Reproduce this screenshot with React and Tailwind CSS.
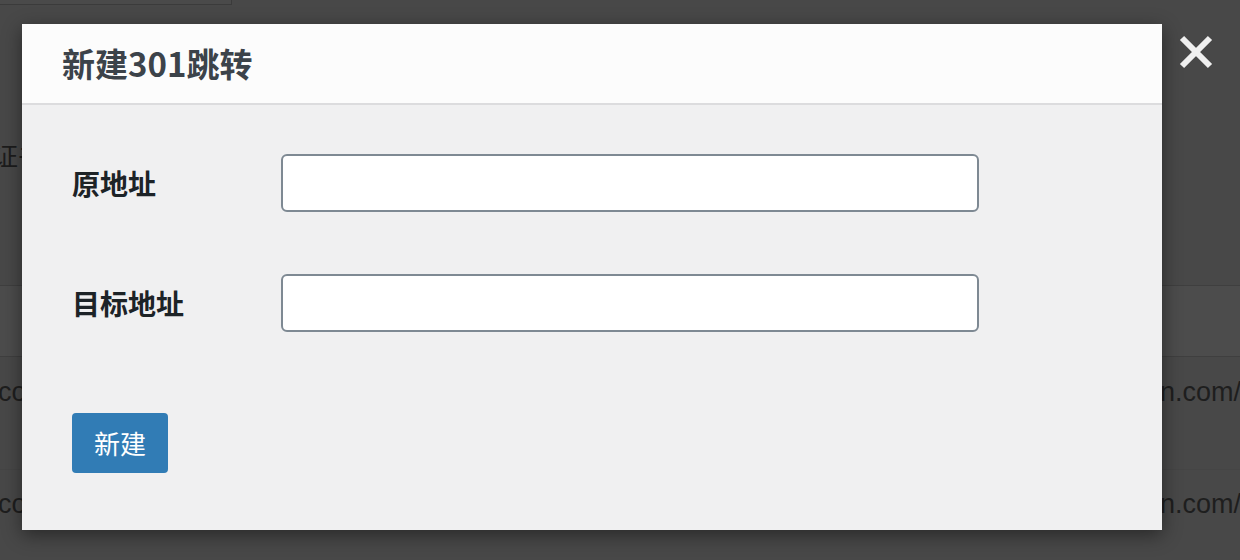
import React from 'react'

const cjk = { fontFamily: '"Noto Sans CJK SC", "Noto Sans", sans-serif' }

const CloseIcon = () => (
  <svg width="34" height="34" viewBox="0 0 34 34" fill="none" xmlns="http://www.w3.org/2000/svg">
    <path d="M3 3L31 31M31 3L3 31" stroke="#f0f0f0" strokeWidth="6" />
  </svg>
)

const Field = ({ label }) => (
  <div className="flex items-center">
    <label className="w-[209px] text-[28px] font-bold text-[#1d2327] leading-none">{label}</label>
    <input
      type="text"
      className="w-[698px] h-[58px] rounded-[6px] border-2 border-[#7e8993] bg-white px-3 outline-none"
    />
  </div>
)

const BgRow = ({ className }) => (
  <div className={`flex items-start text-[27px] leading-none text-[#1e1e1e] ${className}`}>
    <span className="w-[1162px] shrink-0 ml-[-2px]">co</span>
    <span className="shrink-0 whitespace-nowrap">n.com/</span>
  </div>
)

export default function App() {
  return (
    <div
      className="relative w-[1240px] h-[560px] overflow-hidden bg-[#484848]"
      style={{ fontFamily: '"Liberation Sans", "Noto Sans CJK SC", sans-serif' }}
    >
      {/* page behind the overlay */}
      <div className="w-[232px] h-[5px] border-b border-r border-[#3b3b3b] bg-[#4a4a4a]" />
      <div className="h-[163px] flex items-end">
        <span className="ml-[-8px] text-[26px] text-[#1c1c1c] leading-none" style={cjk}>证书</span>
      </div>
      <div className="mt-[117px] h-[72px] border-t border-b border-[#3f3f3f] bg-[#4c4c4c]" />
      <BgRow className="h-[113px] pt-[22px] border-b border-[#454545]" />
      <BgRow className="h-[70px] pt-[21px]" />

      {/* close button */}
      <button type="button" className="absolute left-[1179px] top-[35px]">
        <CloseIcon />
      </button>

      {/* modal */}
      <div
        className="absolute left-[22px] top-[24px] w-[1140px] h-[506px] flex flex-col bg-[#f0f0f1] shadow-[0_5px_18px_rgba(0,0,0,0.45)]"
        style={cjk}
      >
        <div className="h-[81px] shrink-0 flex items-center pl-[40px] bg-[#fcfcfc] border-b-2 border-[#dcdcde]">
          <h1 className="text-[33px] font-bold text-[#3c434a] leading-none">新建301跳转</h1>
        </div>
        <div className="flex flex-col pl-[50px] pt-[49px]">
          <Field label="原地址" />
          <div className="h-[62px]" />
          <Field label="目标地址" />
          <button
            type="button"
            className="mt-[81px] w-[96px] h-[60px] rounded-[4px] bg-[#317cb5] text-white text-[26px] leading-none"
          >
            新建
          </button>
        </div>
      </div>
    </div>
  )
}
